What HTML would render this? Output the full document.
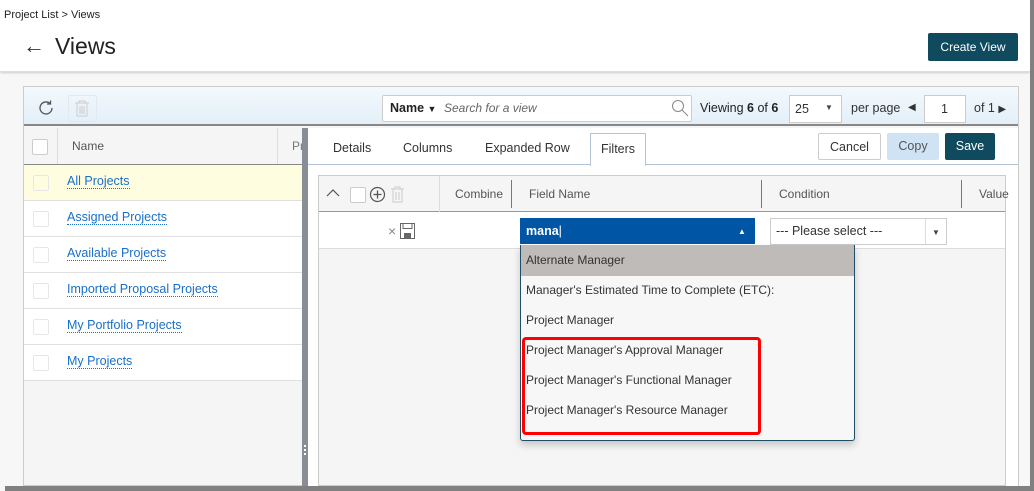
<!DOCTYPE html>
<html><head><meta charset="utf-8"><style>
*{box-sizing:border-box;margin:0;padding:0}
body{width:1034px;height:491px;overflow:hidden;background:#f7f7f7;font-family:"Liberation Sans",sans-serif;font-size:12px;color:#333;position:relative}
.a{position:absolute;white-space:nowrap}
.cb{position:absolute;width:16px;height:16px;border:1px solid #ddd;border-radius:2px;background:#fff}
.lnk{color:#1a6fc9;border-bottom:1px dotted #1a6fc9;font-size:12.5px}
.row{position:absolute;left:24px;width:278px;height:36px;border-bottom:1px solid #e0e0e0;background:#fff}
.row .cb{left:9px;top:10px;border-color:#e6e6e6}
.row span{position:absolute;left:43px;top:9px;white-space:nowrap}
.opt{position:absolute;left:526px;font-size:12px;color:#333;white-space:nowrap}
.btn{position:absolute;height:27px;border-radius:2px;font-size:12.5px;text-align:center;line-height:26px}
</style></head><body>
<div class="a" style="left:0;top:0;width:1030px;height:72px;background:#fff;border-bottom:1px solid #ddd;box-shadow:0 1px 2px #ccc"></div>
<div class="a" style="left:4px;top:9px;font-size:11px;color:#222">Project List &gt; Views</div>
<div class="a" style="left:23px;top:33px;font-size:22px;color:#333">&#8592;</div>
<div class="a" style="left:55px;top:33px;font-size:23px;color:#222">Views</div>
<div class="btn" style="left:928px;top:33px;width:90px;height:28px;background:#0f4a5e;color:#fff;font-size:12px;line-height:28px">Create View</div>
<div class="a" style="left:1030px;top:0;width:4px;height:491px;background:#808080"></div>
<div class="a" style="left:5px;top:486px;width:1029px;height:5px;background:#808080"></div>
<div class="a" style="left:23px;top:86px;width:996px;height:400px;border:1px solid #ccc;background:#f5f5f5"></div>
<div class="a" style="left:24px;top:87px;width:994px;height:39px;background:linear-gradient(#f3f9fd,#e3eff8);border-bottom:2px solid #888"></div>
<svg class="a" style="left:36px;top:98px" width="20" height="20" viewBox="0 0 20 20"><path d="M16 10a6 6 0 1 1-2-4.5" fill="none" stroke="#555" stroke-width="1.3"/><path d="M14.5 2.5v3.5h-3.5" fill="none" stroke="#555" stroke-width="1.3"/></svg>
<div class="a" style="left:68px;top:95px;width:29px;height:27px;border:1px solid #e3e9ee;border-radius:2px"></div>
<svg class="a" style="left:74px;top:100px" width="16" height="17" viewBox="0 0 16 17"><path d="M1 3h14M5 3V1h6v2M3 3v13h10V3M6 6v8M8 6v8M10 6v8" fill="none" stroke="#ccc"/></svg>
<div class="a" style="left:382px;top:95px;width:310px;height:27px;background:#fff;border:1px solid #ccc;border-radius:2px"></div>
<div class="a" style="left:390px;top:101px;font-weight:bold;font-size:12.5px;color:#222">Name <span style="font-size:9px">&#9660;</span></div>
<div class="a" style="left:444px;top:101px;font-style:italic;color:#666">Search for a view</div>
<svg class="a" style="left:671px;top:99px" width="18" height="18" viewBox="0 0 18 18"><circle cx="7" cy="7" r="5.5" fill="none" stroke="#888"/><path d="M11 11l6 6" stroke="#888"/></svg>
<div class="a" style="left:700px;top:101px;font-size:12.5px;color:#222">Viewing <b>6</b> of <b>6</b></div>
<div class="a" style="left:789px;top:95px;width:53px;height:28px;background:#fff;border:1px solid #ccc"></div>
<div class="a" style="left:795px;top:102px;font-size:12.5px">25</div>
<div class="a" style="left:825px;top:103px;font-size:8px;color:#444">&#9660;</div>
<div class="a" style="left:851px;top:101px;font-size:12.5px">per page</div>
<div class="a" style="left:908px;top:102px;font-size:10px">&#9664;</div>
<div class="a" style="left:924px;top:95px;width:42px;height:28px;background:#fff;border:1px solid #ccc"></div>
<div class="a" style="left:941px;top:102px;font-size:12.5px">1</div>
<div class="a" style="left:974px;top:101px;font-size:12.5px">of 1 <span style="font-size:10px">&#9654;</span></div>
<div class="a" style="left:24px;top:128px;width:278px;height:37px;background:#f5f5f5;border-bottom:1px solid #888"></div>
<div class="cb" style="left:32px;top:139px;border-color:#ccc"></div>
<div class="a" style="left:57px;top:128px;width:1px;height:36px;background:#ddd"></div>
<div class="a" style="left:72px;top:139px;color:#555">Name</div>
<div class="a" style="left:277px;top:128px;width:1px;height:36px;background:#ddd"></div>
<div class="a" style="left:292px;top:139px;color:#777">Pr</div>
<div class="row" style="top:165px;background:#fefde0"><div class="cb" style="background:#fefde0"></div><span class="lnk">All Projects</span></div>
<div class="row" style="top:201px"><div class="cb"></div><span class="lnk">Assigned Projects</span></div>
<div class="row" style="top:237px"><div class="cb"></div><span class="lnk">Available Projects</span></div>
<div class="row" style="top:273px"><div class="cb"></div><span class="lnk">Imported Proposal Projects</span></div>
<div class="row" style="top:309px"><div class="cb"></div><span class="lnk">My Portfolio Projects</span></div>
<div class="row" style="top:345px"><div class="cb"></div><span class="lnk">My Projects</span></div>
<div class="a" style="left:302px;top:128px;width:6px;height:358px;background:#878e96"></div>
<div class="a" style="left:304px;top:445px;width:2px;height:10px;border-left:2px dotted #fff"></div>
<div class="a" style="left:308px;top:128px;width:710px;height:358px;background:#fff"></div>
<div class="a" style="left:308px;top:164px;width:710px;height:1px;background:#b5c5d5"></div>
<div class="a" style="left:333px;top:141px;font-size:12.5px">Details</div>
<div class="a" style="left:403px;top:141px;font-size:12.5px">Columns</div>
<div class="a" style="left:485px;top:141px;font-size:12.5px">Expanded Row</div>
<div class="a" style="left:590px;top:133px;width:56px;height:33px;background:#fff;border:1px solid #b5c5d5;border-bottom:none"></div>
<div class="a" style="left:601px;top:142px;font-size:12.5px">Filters</div>
<div class="btn" style="left:818px;top:133px;width:63px;border:1px solid #ccc;background:#fff">Cancel</div>
<div class="btn" style="left:887px;top:133px;width:52px;background:#cfe3f5;color:#555">Copy</div>
<div class="btn" style="left:945px;top:133px;width:50px;background:#0f4a5e;color:#fff">Save</div>
<div class="a" style="left:318px;top:175px;width:688px;height:311px;background:#f5f5f5;border:1px solid #ccc"></div>
<div class="a" style="left:319px;top:176px;width:686px;height:36px;background:#f5f5f5;border-bottom:1px solid #999"></div>
<div class="a" style="left:319px;top:212px;width:686px;height:37px;background:#fff;border-bottom:1px solid #ddd"></div>
<svg class="a" style="left:326px;top:188px" width="14" height="10" viewBox="0 0 14 10"><path d="M1 8l6-6 6 6" fill="none" stroke="#555" stroke-width="1.2"/></svg>
<div class="cb" style="left:350px;top:187px;border-color:#ccc"></div>
<svg class="a" style="left:369px;top:186px" width="17" height="17" viewBox="0 0 17 17"><circle cx="8.5" cy="8.5" r="7" fill="none" stroke="#555" stroke-width="1.2"/><path d="M8.5 4.5v8M4.5 8.5h8" stroke="#555" stroke-width="1.3"/></svg>
<svg class="a" style="left:390px;top:186px" width="15" height="17" viewBox="0 0 15 17"><path d="M1 3h13M5 3V1h5v2M3 3v13h9V3M6 6v8M9 6v8" fill="none" stroke="#ccc"/></svg>
<div class="a" style="left:439px;top:176px;width:1px;height:36px;background:#ddd"></div>
<div class="a" style="left:455px;top:187px;color:#555">Combine</div>
<div class="a" style="left:511px;top:180px;width:1px;height:28px;background:#777"></div>
<div class="a" style="left:529px;top:187px;color:#555">Field Name</div>
<div class="a" style="left:761px;top:180px;width:1px;height:28px;background:#777"></div>
<div class="a" style="left:779px;top:187px;color:#555">Condition</div>
<div class="a" style="left:961px;top:180px;width:1px;height:28px;background:#777"></div>
<div class="a" style="left:979px;top:187px;color:#555">Value</div>
<div class="a" style="left:388px;top:223px;color:#888;font-size:14px">×</div>
<svg class="a" style="left:400px;top:223px" width="15" height="16" viewBox="0 0 15 16"><rect x="0.5" y="0.5" width="14" height="15" fill="none" stroke="#666"/><rect x="3" y="0.5" width="9" height="5" fill="none" stroke="#666"/><rect x="4" y="10" width="7" height="5" fill="#666"/></svg>
<div class="a" style="left:520px;top:218px;width:235px;height:26px;background:#0055a4"></div>
<div class="a" style="left:526px;top:224px;color:#fff;font-weight:bold;font-size:12.5px">mana<span style="font-weight:normal">|</span></div>
<div class="a" style="left:738px;top:227px;color:#fff;font-size:8px">&#9650;</div>
<div class="a" style="left:770px;top:218px;width:177px;height:27px;background:#fff;border:1px solid #ccc"></div>
<div class="a" style="left:925px;top:219px;width:1px;height:25px;background:#ddd"></div>
<div class="a" style="left:776px;top:224px;font-size:12.5px">--- Please select ---</div>
<div class="a" style="left:932px;top:228px;font-size:8px;color:#444">&#9660;</div>
<div class="a" style="left:520px;top:245px;width:335px;height:196px;background:#f7f7f7;border:1px solid #1f4e66;border-top:none;border-radius:0 0 3px 3px;box-shadow:0 4px 8px rgba(0,0,0,.2)"></div>
<div class="a" style="left:521px;top:245px;width:333px;height:31px;background:#bfbbb8"></div>
<div class="opt" style="top:253px">Alternate Manager</div>
<div class="opt" style="top:283px">Manager's Estimated Time to Complete (ETC):</div>
<div class="opt" style="top:313px">Project Manager</div>
<div class="opt" style="top:343px">Project Manager's Approval Manager</div>
<div class="opt" style="top:373px">Project Manager's Functional Manager</div>
<div class="opt" style="top:403px">Project Manager's Resource Manager</div>
<div class="a" style="left:522px;top:337px;width:239px;height:98px;border:3px solid #f00;border-radius:4px"></div>
</body></html>
